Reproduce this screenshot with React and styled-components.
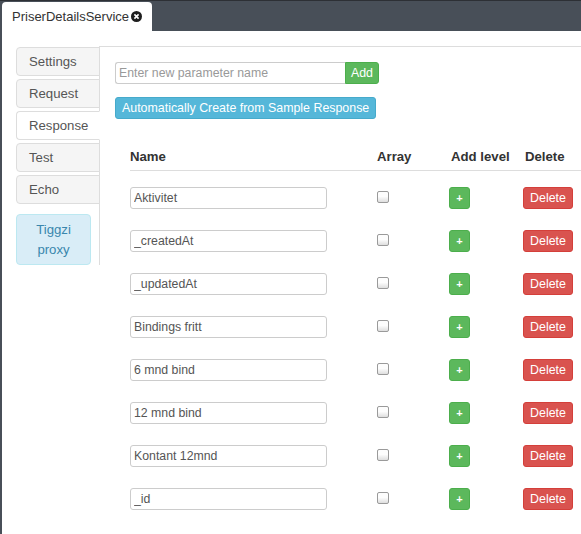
import styled, { createGlobalStyle } from 'styled-components';

const GlobalStyle = createGlobalStyle`
  body {
    margin: 0;
    overflow: hidden;
    background: #484f58;
    font-family: "Liberation Sans", Arial, sans-serif;
  }
`;

const Frame = styled.div`
  min-height: 100vh;
  padding-left: 2px;
  border-top: 1px solid #2d3035;
  box-sizing: border-box;
  background: #484f58;
`;

const TabBar = styled.div`
  height: 30px;
  padding-top: 1px;
  box-sizing: border-box;
  display: flex;
  align-items: flex-end;
`;

const Tab = styled.div`
  width: 150px;
  height: 29px;
  box-sizing: border-box;
  padding-left: 10px;
  background: #fff;
  border-radius: 4px 4px 0 0;
  display: flex;
  align-items: center;
  gap: 2px;
  font-size: 13px;
  color: #333;
`;

const Panel = styled.div`
  background: #fff;
  min-height: calc(100vh - 31px);
  padding: 15px 0 0 14px;
  box-sizing: border-box;
  display: flex;
  align-items: flex-start;
`;

const SideNav = styled.nav`
  width: 84px;
  flex-shrink: 0;
  padding-top: 1px;
  border-right: 1px solid #ddd;
  box-sizing: border-box;
  display: flex;
  flex-direction: column;
  gap: 3px;
`;

const NavItem = styled.div`
  height: 29px;
  margin-right: -1px;
  box-sizing: border-box;
  padding-left: 12px;
  display: flex;
  align-items: center;
  font-size: 13.2px;
  color: #555;
  border: 1px solid #ddd;
  border-radius: 4px 0 0 4px;
  background: ${(p) => (p.$active ? '#fff' : '#f5f5f5')};
  border-right-color: ${(p) => (p.$active ? '#fff' : '#ddd')};
`;

const ProxyBox = styled.div`
  width: 75px;
  height: 51px;
  margin-top: 7px;
  box-sizing: border-box;
  background: #d9edf7;
  border: 1px solid #bce8f1;
  border-radius: 4px;
  color: #3a87ad;
  font-size: 13.2px;
  line-height: 20px;
  text-align: center;
  padding-top: 5px;
`;

const Content = styled.main`
  flex: 1;
  border-top: 1px solid #ddd;
  padding: 15px 0 0 15px;
  min-width: 0;
`;

const ParamForm = styled.div`
  display: flex;
`;

const ParamInput = styled.input`
  width: 230px;
  height: 22px;
  box-sizing: border-box;
  border: 1px solid #ccc;
  border-right: none;
  border-radius: 3px 0 0 3px;
  padding: 0 3px;
  font: 12.3px "Liberation Sans", Arial, sans-serif;
  color: #555;
  &::placeholder {
    color: #999;
  }
`;

const Button = styled.button`
  height: 22px;
  box-sizing: border-box;
  padding: 0 ${(p) => p.$pad ?? 6}px;
  min-width: ${(p) => p.$width || 0}px;
  font: ${(p) => (p.$bold ? 'bold 11px' : '12.4px')} "Liberation Sans", Arial, sans-serif;
  color: #fff;
  background: ${(p) => p.$bg};
  border: 1px solid ${(p) => p.$border};
  border-radius: ${(p) => p.$radius || '3px'};
  cursor: pointer;
  display: inline-flex;
  align-items: center;
  justify-content: center;
`;

const AutoRow = styled.div`
  margin-top: 13px;
`;

const Table = styled.div`
  margin: 25px 0 0 15px;
  width: 480px;
`;

const Grid = styled.div`
  display: grid;
  grid-template-columns: 247px 72px 74px 1fr;
  align-items: center;
`;

const HeadRow = styled(Grid)`
  height: 26px;
  border-bottom: 1px solid #ddd;
`;

const HeadCell = styled.div`
  font-size: 13.2px;
  font-weight: bold;
  color: #333;
  padding-left: ${(p) => p.$shift || 0}px;
  padding-bottom: 1px;
`;

const BodyRow = styled(Grid)`
  padding: 16px 0 5px;
`;

const NameInput = styled.input`
  width: 197px;
  height: 22px;
  box-sizing: border-box;
  border: 1px solid #ccc;
  border-radius: 3px;
  padding: 0 3px;
  font: 12.3px "Liberation Sans", Arial, sans-serif;
  color: #555;
`;

const Check = styled.input`
  appearance: none;
  margin: 0;
  width: 12px;
  height: 12px;
  border: 1px solid #9a9a9a;
  border-radius: 2px;
  background: linear-gradient(#fdfdfd 45%, #dedede);
`;

const CloseIcon = () => (
  <svg width="11" height="11" viewBox="0 0 11 11">
    <circle cx="5.5" cy="5.5" r="5.5" fill="#1e1e1e" />
    <path d="M3.4 3.4 L7.6 7.6 M7.6 3.4 L3.4 7.6" stroke="#fff" strokeWidth="1.6" />
  </svg>
);

const params = [
  'Aktivitet',
  '_createdAt',
  '_updatedAt',
  'Bindings fritt',
  '6 mnd bind',
  '12 mnd bind',
  'Kontant 12mnd',
  '_id',
];

const tabs = ['Settings', 'Request', 'Response', 'Test', 'Echo'];

export default function App() {
  return (
    <Frame>
      <GlobalStyle />
      <TabBar>
        <Tab>
          PriserDetailsService
          <CloseIcon />
        </Tab>
      </TabBar>
      <Panel>
        <SideNav>
          {tabs.map((t) => (
            <NavItem key={t} $active={t === 'Response'}>
              {t}
            </NavItem>
          ))}
          <ProxyBox>
            Tiggzi
            <br />
            proxy
          </ProxyBox>
        </SideNav>
        <Content>
          <ParamForm>
            <ParamInput placeholder="Enter new parameter name" />
            <Button $bg="#5cb85c" $border="#4cae4c" $radius="0 3px 3px 0" $pad={0} $width={34}>
              Add
            </Button>
          </ParamForm>
          <AutoRow>
            <Button $bg="#55b7d9" $border="#46aacb">
              Automatically Create from Sample Response
            </Button>
          </AutoRow>
          <Table>
            <HeadRow>
              <HeadCell>Name</HeadCell>
              <HeadCell>Array</HeadCell>
              <HeadCell $shift={2}>Add level</HeadCell>
              <HeadCell $shift={2}>Delete</HeadCell>
            </HeadRow>
            {params.map((p) => (
              <BodyRow key={p}>
                <div>
                  <NameInput defaultValue={p} />
                </div>
                <div>
                  <Check type="checkbox" />
                </div>
                <div>
                  <Button $bg="#5cb85c" $border="#4cae4c" $pad={0} $width={21} $bold>
                    +
                  </Button>
                </div>
                <div>
                  <Button $bg="#d9534f" $border="#d43f3a" $pad={0} $width={50}>
                    Delete
                  </Button>
                </div>
              </BodyRow>
            ))}
          </Table>
        </Content>
      </Panel>
    </Frame>
  );
}
